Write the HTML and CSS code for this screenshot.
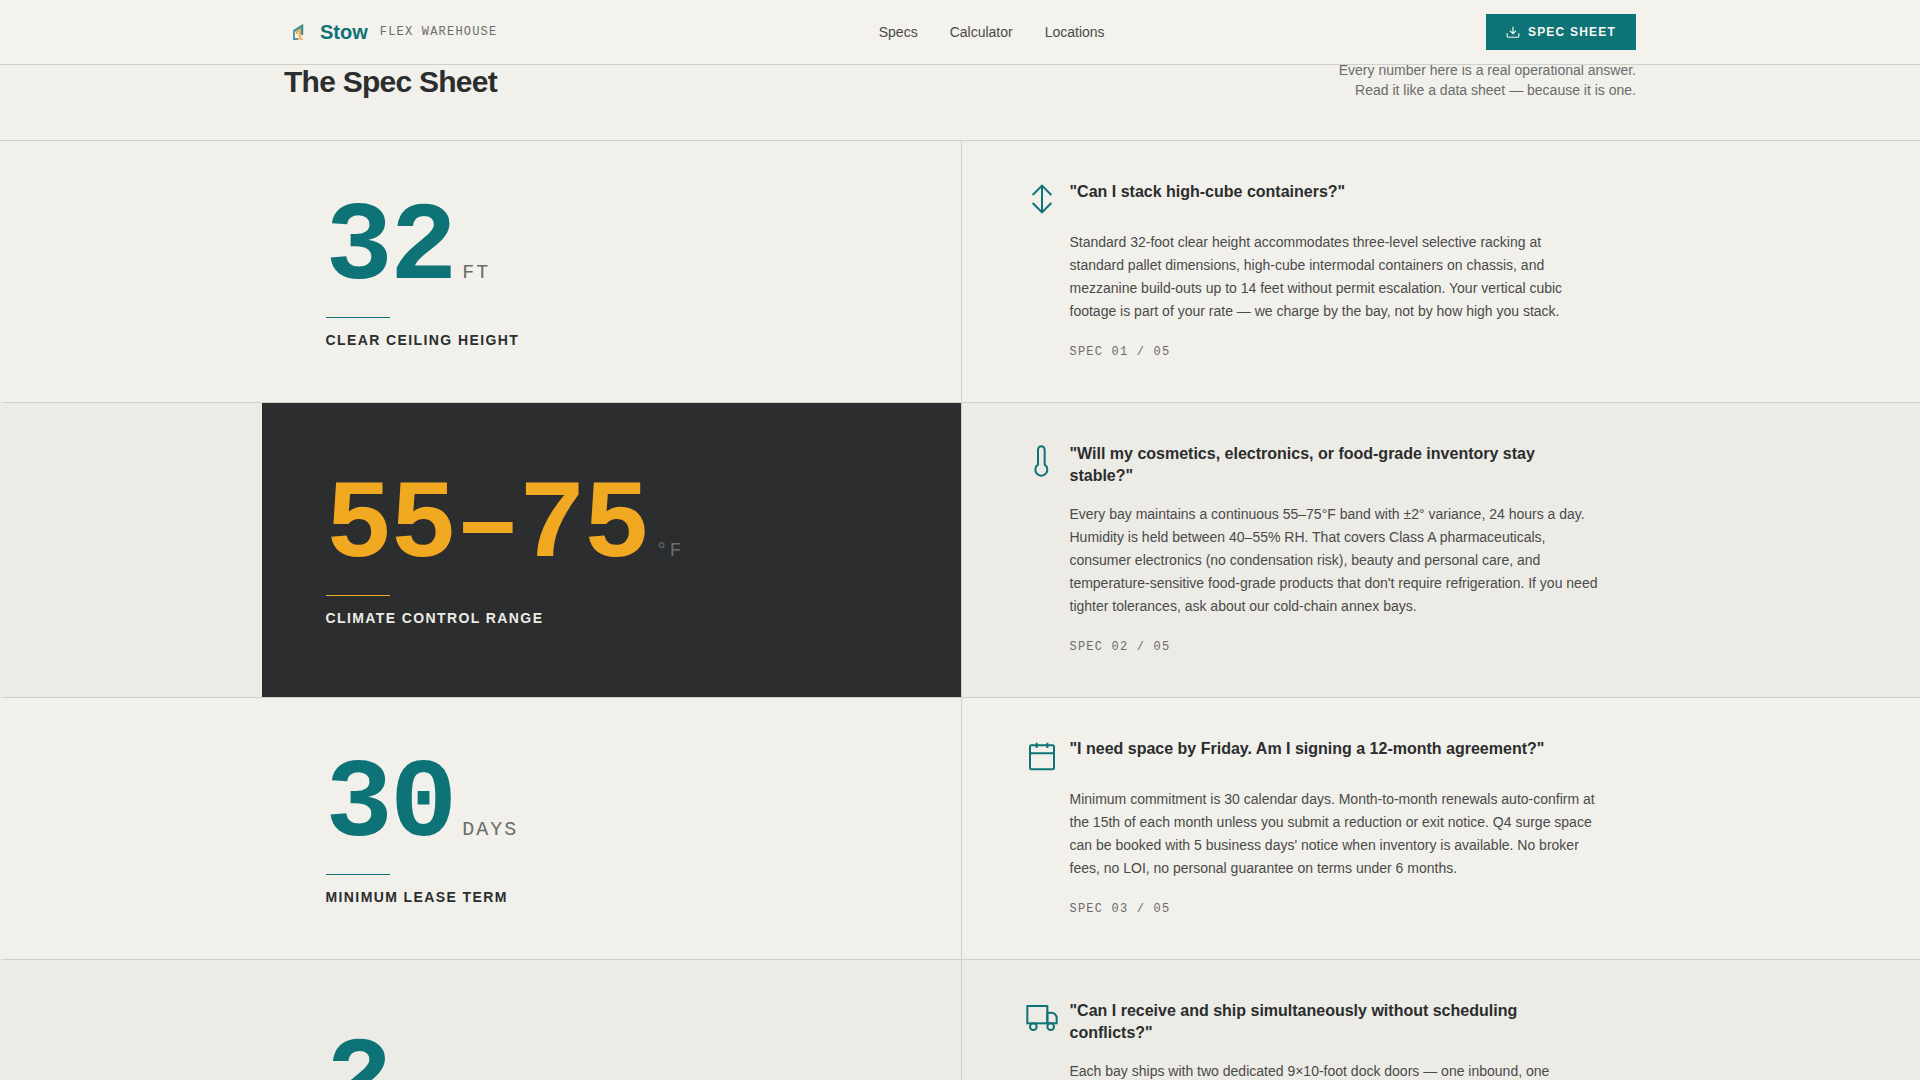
FILE: index.html
```html
<!DOCTYPE html>
<html lang="en">
<head>
  <meta charset="UTF-8">
  <meta name="viewport" content="width=device-width, initial-scale=1.0">
  <title>Stow Flex Warehouse</title>
  <link rel="stylesheet" href="styles.css">
</head>
<body>
  <header class="site-header">
    <div class="header-inner">
      <a class="brand" href="#">
        <svg class="brand-mark" viewBox="0 0 28 28" fill="none" aria-hidden="true">
          <path d="M10 13L18 8v9" stroke="#3f918d" stroke-width="2.5"/>
          <path d="M10 12v9h4" stroke="#5b93a3" stroke-width="2"/>
          <path d="M13 16v-2l3-2v9" stroke="#eda955" stroke-width="2"/>
          <path d="M14 17h4M14 21h5" stroke="#f0bd80" stroke-width="2"/>
        </svg>
        <span class="brand-name">Stow</span>
        <span class="brand-tag">FLEX WAREHOUSE</span>
      </a>
      <nav class="site-nav">
        <a href="#specs">Specs</a>
        <a href="#calculator">Calculator</a>
        <a href="#locations">Locations</a>
      </nav>
      <button class="btn-sheet" type="button">
        <svg viewBox="0 0 24 24" aria-hidden="true">
          <path d="M12 3v12M7 10l5 5 5-5M2 14v5a2 2 0 0 0 2 2h16a2 2 0 0 0 2-2v-5"/>
        </svg>
        SPEC SHEET
      </button>
    </div>
  </header>

  <main id="specs">
    <div class="section-head">
      <div class="section-inner">
        <h2>The Spec Sheet</h2>
        <p>Every number here is a real operational answer.<br>Read it like a data sheet — because it is one.</p>
      </div>
    </div>

    <section class="spec-row">
      <div class="spec-stat">
        <div class="stat-figure"><span class="stat-number">32</span><span class="stat-unit">FT</span></div>
        <div class="stat-rule"></div>
        <div class="stat-label">CLEAR CEILING HEIGHT</div>
      </div>
      <div class="spec-detail">
        <div class="detail-head">
          <svg class="detail-icon" viewBox="0 0 24 24" aria-hidden="true">
            <path d="M12 2v20M5 9l7-7 7 7M5 15l7 7 7-7"/>
          </svg>
          <h3>"Can I stack high-cube containers?"</h3>
        </div>
        <p class="detail-text">Standard 32-foot clear height accommodates three-level selective racking at standard pallet dimensions, high-cube intermodal containers on chassis, and mezzanine build-outs up to 14 feet without permit escalation. Your vertical cubic footage is part of your rate — we charge by the bay, not by how high you stack.</p>
        <div class="detail-index">SPEC 01 / 05</div>
      </div>
    </section>

    <section class="spec-row alt">
      <div class="spec-stat dark">
        <div class="stat-figure"><span class="stat-number">55–75</span><span class="stat-unit">°F</span></div>
        <div class="stat-rule"></div>
        <div class="stat-label">CLIMATE CONTROL RANGE</div>
      </div>
      <div class="spec-detail">
        <div class="detail-head">
          <svg class="detail-icon" viewBox="0 0 24 24" aria-hidden="true">
            <path d="M14 14.76V3.5a2.5 2.5 0 0 0-5 0v11.26a4.5 4.5 0 1 0 5 0z"/>
          </svg>
          <h3>"Will my cosmetics, electronics, or food-grade inventory stay stable?"</h3>
        </div>
        <p class="detail-text">Every bay maintains a continuous 55–75°F band with ±2° variance, 24 hours a day. Humidity is held between 40–55% RH. That covers Class A pharmaceuticals, consumer electronics (no condensation risk), beauty and personal care, and temperature-sensitive food-grade products that don't require refrigeration. If you need tighter tolerances, ask about our cold-chain annex bays.</p>
        <div class="detail-index">SPEC 02 / 05</div>
      </div>
    </section>

    <section class="spec-row">
      <div class="spec-stat">
        <div class="stat-figure"><span class="stat-number">30</span><span class="stat-unit">DAYS</span></div>
        <div class="stat-rule"></div>
        <div class="stat-label">MINIMUM LEASE TERM</div>
      </div>
      <div class="spec-detail">
        <div class="detail-head">
          <svg class="detail-icon" viewBox="0 0 24 24" aria-hidden="true">
            <rect x="3" y="4" width="18" height="18" rx="1"/>
            <path d="M16 2v4M8 2v4M3 10h18"/>
          </svg>
          <h3>"I need space by Friday. Am I signing a 12-month agreement?"</h3>
        </div>
        <p class="detail-text">Minimum commitment is 30 calendar days. Month-to-month renewals auto-confirm at the 15th of each month unless you submit a reduction or exit notice. Q4 surge space can be booked with 5 business days' notice when inventory is available. No broker fees, no LOI, no personal guarantee on terms under 6 months.</p>
        <div class="detail-index">SPEC 03 / 05</div>
      </div>
    </section>

    <section class="spec-row alt">
      <div class="spec-stat">
        <div class="stat-figure"><span class="stat-number">2</span><span class="stat-unit">DOORS</span></div>
        <div class="stat-rule"></div>
        <div class="stat-label">DOCK DOORS PER BAY</div>
      </div>
      <div class="spec-detail">
        <div class="detail-head">
          <svg class="detail-icon" viewBox="0 0 24 24" aria-hidden="true">
            <rect x="1" y="3" width="15" height="13"/>
            <path d="M16 8h3a4 4 0 0 1 4 4v4h-7z"/>
            <circle cx="5.5" cy="18.5" r="2.5"/>
            <circle cx="18.5" cy="18.5" r="2.5"/>
          </svg>
          <h3>"Can I receive and ship simultaneously without scheduling conflicts?"</h3>
        </div>
        <p class="detail-text">Each bay ships with two dedicated 9×10-foot dock doors — one inbound, one outbound — so receiving never waits on shipping. Both doors have levelers, seals and bumpers, and both are yours around the clock. There is no shared dock calendar and no yard queue to work around. Drivers back in, unload and leave while your outbound team keeps loading at the second door without a break.</p>
        <div class="detail-index">SPEC 04 / 05</div>
      </div>
    </section>
  </main>
</body>
</html>
```
FILE: styles.css
```css
* {
  box-sizing: border-box;
  margin: 0;
  padding: 0;
}

body {
  font-family: "Liberation Sans", Arial, sans-serif;
  background-color: #f1f0ea;
  color: #2b2d2e;
}

a {
  color: inherit;
  text-decoration: none;
}

/* Header */
.site-header {
  position: fixed;
  top: 0;
  left: 0;
  right: 0;
  z-index: 10;
  background-color: #f3f2ec;
  border-bottom: 1px solid #d0d0cb;
}

.header-inner {
  display: flex;
  justify-content: space-between;
  align-items: center;
  max-width: 1400px;
  height: 64px;
  margin: 0 auto;
  padding: 0 24px;
}

.brand {
  display: flex;
  align-items: center;
}

.brand-mark {
  width: 28px;
  height: 28px;
  margin-right: 8px;
}

.brand-name {
  margin-right: 12px;
  font-size: 20px;
  font-weight: bold;
  color: #0d7377;
}

.brand-tag {
  font-family: "Liberation Mono", "Courier New", monospace;
  font-size: 12px;
  letter-spacing: 0.1em;
  color: #6b6b6b;
}

.site-nav {
  display: flex;
  gap: 32px;
  font-size: 14px;
  color: #4a4a4a;
}

.btn-sheet {
  display: flex;
  align-items: center;
  gap: 8px;
  height: 36px;
  padding: 0 20px;
  border: none;
  background-color: #0d7377;
  color: #f8f7f2;
  font-family: inherit;
  font-size: 12px;
  font-weight: bold;
  letter-spacing: 0.1em;
  cursor: pointer;
}

.btn-sheet svg {
  width: 14px;
  height: 14px;
  fill: none;
  stroke: currentColor;
  stroke-width: 2;
}

/* Section heading */
.section-head {
  padding: 60px 0 40px;
  border-bottom: 1px solid #d0d0cb;
}

.section-inner {
  display: flex;
  justify-content: space-between;
  align-items: flex-end;
  max-width: 1400px;
  margin: 0 auto;
  padding: 0 24px;
}

.section-inner h2 {
  font-size: 30px;
  line-height: 36px;
  letter-spacing: -0.025em;
}

.section-inner p {
  font-size: 14px;
  line-height: 20px;
  text-align: right;
  color: #6b6b6b;
}

/* Spec rows */
.spec-row {
  display: grid;
  grid-template-columns: 1fr minmax(0, 700px) minmax(0, 700px) 1fr;
  border-left: 3px solid transparent;
  border-bottom: 1px solid #d0d0cb;
}

.spec-row.alt {
  background-color: #ecebe5;
}

.spec-stat {
  grid-column: 2;
  display: flex;
  flex-direction: column;
  justify-content: center;
  padding: 40px 64px;
  border-right: 1px solid #d0d0cb;
}

.stat-figure {
  display: flex;
  align-items: baseline;
  gap: 8px;
  font-family: "Liberation Mono", "Courier New", monospace;
}

.stat-number {
  font-size: 112px;
  line-height: 112px;
  font-weight: bold;
  letter-spacing: -0.025em;
  color: #0d7377;
}

.stat-unit {
  font-size: 20px;
  letter-spacing: 0.1em;
  color: #6b6b6b;
}

.stat-rule {
  width: 64px;
  height: 1px;
  margin: 12px 0 11px;
  background-color: #0d7377;
}

.stat-label {
  font-size: 14px;
  line-height: 22px;
  font-weight: bold;
  letter-spacing: 0.1em;
}

.dark {
  background-color: #2b2d2e;
}

.dark .stat-number {
  color: #f2a922;
}

.dark .stat-rule {
  background-color: #f2a922;
}

.dark .stat-label {
  color: #ecebe5;
}

.spec-detail {
  grid-column: 3;
  padding: 40px 64px;
}

.detail-head {
  display: flex;
  gap: 12px;
  margin-bottom: 16px;
}

.detail-icon {
  flex-shrink: 0;
  width: 32px;
  height: 32px;
  margin-top: 2px;
  fill: none;
  stroke: #0d7377;
  stroke-width: 1.5;
}

.detail-head h3 {
  font-size: 16px;
  line-height: 22px;
}

.detail-text {
  margin: 0 0 20px 44px;
  font-size: 14px;
  line-height: 23px;
  color: #4a4a4a;
}

.detail-index {
  margin-left: 44px;
  font-family: "Liberation Mono", "Courier New", monospace;
  font-size: 12px;
  line-height: 19px;
  letter-spacing: 0.1em;
  color: #6b6b6b;
}
```
